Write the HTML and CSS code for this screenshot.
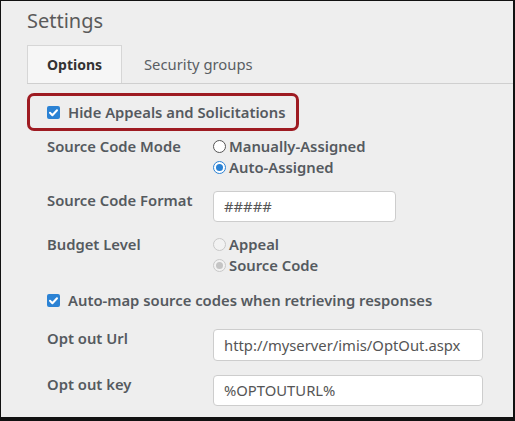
FILE: index.html
```html
<!DOCTYPE html>
<html>
<head>
<meta charset="utf-8">
<link rel="stylesheet" href="styles.css">
</head>
<body>
<div class="frame">
  <div class="title">Settings</div>
  <div class="tabs">
    <div class="tab active">Options</div>
    <div class="tab">Security groups</div>
  </div>
  <div class="highlight">
    <span class="check"><svg viewBox="0 0 13 13" width="13" height="13"><path d="M3 6.8 L5.4 9.2 L10 4.2" fill="none" stroke="#fff" stroke-width="2" stroke-linecap="round" stroke-linejoin="round"/></svg></span>
    <span class="strong">Hide Appeals and Solicitations</span>
  </div>
  <div class="form">
    <div class="row r-mode">
      <div class="label">Source Code Mode</div>
      <div class="opts">
        <div class="opt"><span class="radio"></span>Manually-Assigned</div>
        <div class="opt"><span class="radio on"></span>Auto-Assigned</div>
      </div>
    </div>
    <div class="row r-input r-format">
      <div class="label">Source Code Format</div>
      <div class="input short">#####</div>
    </div>
    <div class="row r-budget">
      <div class="label">Budget Level</div>
      <div class="opts">
        <div class="opt"><span class="radio dis"></span>Appeal</div>
        <div class="opt"><span class="radio dis on"></span>Source Code</div>
      </div>
    </div>
    <div class="row r-auto">
      <span class="check"><svg viewBox="0 0 13 13" width="13" height="13"><path d="M3 6.8 L5.4 9.2 L10 4.2" fill="none" stroke="#fff" stroke-width="2" stroke-linecap="round" stroke-linejoin="round"/></svg></span>
      <span class="strong">Auto-map source codes when retrieving responses</span>
    </div>
    <div class="row r-input r-url">
      <div class="label">Opt out Url</div>
      <div class="input long tall">http://myserver/imis/OptOut.aspx</div>
    </div>
    <div class="row r-input r-key">
      <div class="label">Opt out key</div>
      <div class="input long">%OPTOUTURL%</div>
    </div>
  </div>
</div>
</body>
</html>
```
FILE: styles.css
```css
html, body {
  margin: 0;
  padding: 0;
  background: #eeeeee;
}
.frame {
  width: 515px;
  height: 421px;
  box-sizing: border-box;
  border-style: solid;
  border-color: #111;
  border-width: 1px 2px 4px 1px;
  background: #eeeeee;
  padding-left: 26px;
  font-family: "Noto Sans", "Open Sans", sans-serif;
  font-size: 14.8px;
  color: #555a5f;
  overflow: hidden;
}
.title {
  font-size: 20px;
  line-height: 28px;
  margin-top: 6px;
  margin-bottom: 10px;
  color: #5a5a5a;
}
.tabs {
  display: flex;
  height: 38px;
  border-bottom: 1px solid #cfcfcf;
}
.tab {
  line-height: 38px;
  padding-left: 22px;
  color: #5a5e63;
}
.tab.active {
  box-sizing: border-box;
  width: 95px;
  padding: 0;
  text-align: center;
  background: #f6f6f6;
  border: 1px solid #d6d6d6;
  border-bottom: none;
  line-height: 37px;
  font-size: 14px;
  font-weight: 700;
  color: #333;
}
.highlight {
  box-sizing: border-box;
  width: 272px;
  height: 38px;
  margin-top: 9px;
  border: 3px solid #9e1b22;
  border-radius: 7px;
  display: flex;
  align-items: center;
  padding-left: 17px;
  gap: 8px;
}
.strong {
  font-weight: 600;
  line-height: 21px;
}
.check {
  display: inline-flex;
  width: 13px;
  height: 13px;
  background: #2b82d4;
  border-radius: 2px;
  flex: none;
}
.form {
  padding-left: 20px;
  margin-top: 5px;
}
.row {
  display: flex;
  align-items: flex-start;
}
.label {
  width: 166px;
  flex: none;
  font-weight: 600;
  line-height: 21px;
}
.r-input .label {
  line-height: 18px;
}
.opts {
  display: flex;
  flex-direction: column;
}
.opt {
  display: flex;
  align-items: center;
  gap: 3px;
  font-weight: 600;
  line-height: 21px;
}
.radio {
  box-sizing: border-box;
  width: 13px;
  height: 13px;
  border-radius: 50%;
  border: 1px solid #555;
  background: #fff;
  flex: none;
  position: relative;
}
.radio.on {
  border-color: #2b82d4;
}
.radio.on::after {
  content: "";
  position: absolute;
  left: 2px;
  top: 2px;
  width: 7px;
  height: 7px;
  border-radius: 50%;
  background: #2b82d4;
}
.radio.dis {
  border-color: #c8c8c8;
  background: #f2f2f2;
}
.radio.dis.on::after {
  background: #c4c4c4;
}
.input {
  box-sizing: border-box;
  height: 31px;
  background: #fff;
  border: 1px solid #cdcdcd;
  border-radius: 4px;
  padding-left: 10px;
  line-height: 29px;
  color: #555;
}
.input.short { width: 183px; }
.input.long { width: 270px; }
.input.tall { height: 32px; line-height: 30px; }
.r-format { margin-top: 13px; }
.r-budget { margin-top: 12px; }
.r-auto {
  margin-top: 14px;
  align-items: center;
  gap: 8px;
}
.r-url { margin-top: 18px; }
.r-key { margin-top: 14px; }
```
